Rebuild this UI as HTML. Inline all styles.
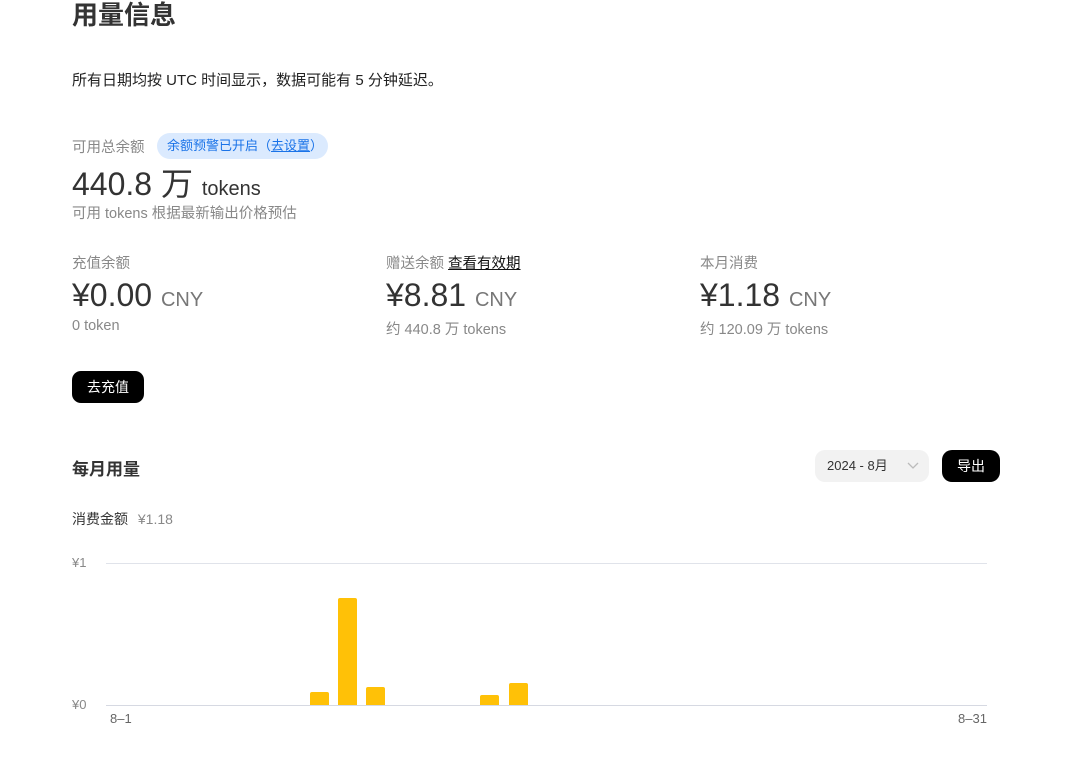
<!DOCTYPE html>
<html><head><meta charset="utf-8"><style>
body{margin:0;width:1080px;height:765px;background:#fff;font-family:"Liberation Sans","Noto Sans CJK SC",sans-serif;color:#222;position:relative;overflow:hidden}
.a{position:absolute;white-space:nowrap}
.g{color:#888}
</style></head><body>
<div class="a" style="left:72px;top:-5px;font-size:26px;font-weight:bold;color:#333">用量信息</div>
<div class="a" style="left:72px;top:69px;font-size:15px;color:#222">所有日期均按 UTC 时间显示，数据可能有 5 分钟延迟。</div>
<div class="a g" style="left:72px;top:136px;font-size:14.5px">可用总余额</div>
<div class="a" style="left:157px;top:133px;height:26px;width:171px;border-radius:13px;background:#dbeafe;color:#1a73e8;font-size:13px;line-height:26px;text-indent:10px">余额预警已开启（<u>去设置</u>）</div>
<div class="a" style="left:72px;top:159px;font-size:32px;color:#333">440.8 万 <span style="font-size:20px">tokens</span></div>
<div class="a g" style="left:72px;top:202px;font-size:14.5px">可用 tokens 根据最新输出价格预估</div>

<div class="a g" style="left:72px;top:252px;font-size:14.5px">充值余额</div>
<div class="a" style="left:72px;top:277px;font-size:32px;color:#333">¥0.00 <span style="font-size:20px;color:#777">CNY</span></div>
<div class="a g" style="left:72px;top:318px;font-size:14.5px">0 token</div>

<div class="a g" style="left:386px;top:252px;font-size:14.5px">赠送余额 <u style="color:#111">查看有效期</u></div>
<div class="a" style="left:386px;top:277px;font-size:32px;color:#333">¥8.81 <span style="font-size:20px;color:#777">CNY</span></div>
<div class="a g" style="left:386px;top:318px;font-size:14.5px">约 440.8 万 tokens</div>

<div class="a g" style="left:700px;top:252px;font-size:14.5px">本月消费</div>
<div class="a" style="left:700px;top:277px;font-size:32px;color:#333">¥1.18 <span style="font-size:20px;color:#777">CNY</span></div>
<div class="a g" style="left:700px;top:318px;font-size:14.5px">约 120.09 万 tokens</div>

<div class="a" style="left:72px;top:371px;width:72px;height:32px;border-radius:9px;background:#000;color:#fff;font-size:14px;line-height:32px;text-align:center">去充值</div>

<div class="a" style="left:72px;top:455px;font-size:17px;font-weight:bold;color:#333">每月用量</div>
<div class="a" style="left:815px;top:450px;width:114px;height:32px;border-radius:10px;background:#f2f2f2;font-size:13px;line-height:32px;text-indent:12px;color:#333">2024 - 8月<svg style="position:absolute;left:92px;top:12px" width="12" height="8"><path d="M1 1l5 5 5-5" fill="none" stroke="#bbb" stroke-width="1.3"/></svg></div>
<div class="a" style="left:942px;top:450px;width:58px;height:32px;border-radius:10px;background:#000;color:#fff;font-size:14px;line-height:32px;text-align:center">导出</div>

<div class="a" style="left:72px;top:509px;font-size:14px;color:#333">消费金额 <span class="g" style="margin-left:6px">¥1.18</span></div>
<div class="a g" style="left:72px;top:555px;font-size:13px">¥1</div>
<div class="a g" style="left:72px;top:697px;font-size:13px">¥0</div>
<div class="a" style="left:106px;top:563px;width:881px;height:1px;background:#e0e3ea"></div>
<div class="a" style="left:106px;top:705px;width:881px;height:1px;background:#d6d9e2"></div>
<div class="a" style="left:310px;top:692px;width:19px;height:13px;background:#ffc107;border-radius:2px 2px 0 0"></div>
<div class="a" style="left:338px;top:598px;width:19px;height:107px;background:#ffc107;border-radius:2px 2px 0 0"></div>
<div class="a" style="left:366px;top:687px;width:19px;height:18px;background:#ffc107;border-radius:2px 2px 0 0"></div>
<div class="a" style="left:480px;top:695px;width:19px;height:10px;background:#ffc107;border-radius:2px 2px 0 0"></div>
<div class="a" style="left:509px;top:683px;width:19px;height:22px;background:#ffc107;border-radius:2px 2px 0 0"></div>
<div class="a" style="left:110px;top:711px;font-size:13px;color:#666">8–1</div>
<div class="a" style="left:958px;top:711px;font-size:13px;color:#666">8–31</div>
</body></html>
